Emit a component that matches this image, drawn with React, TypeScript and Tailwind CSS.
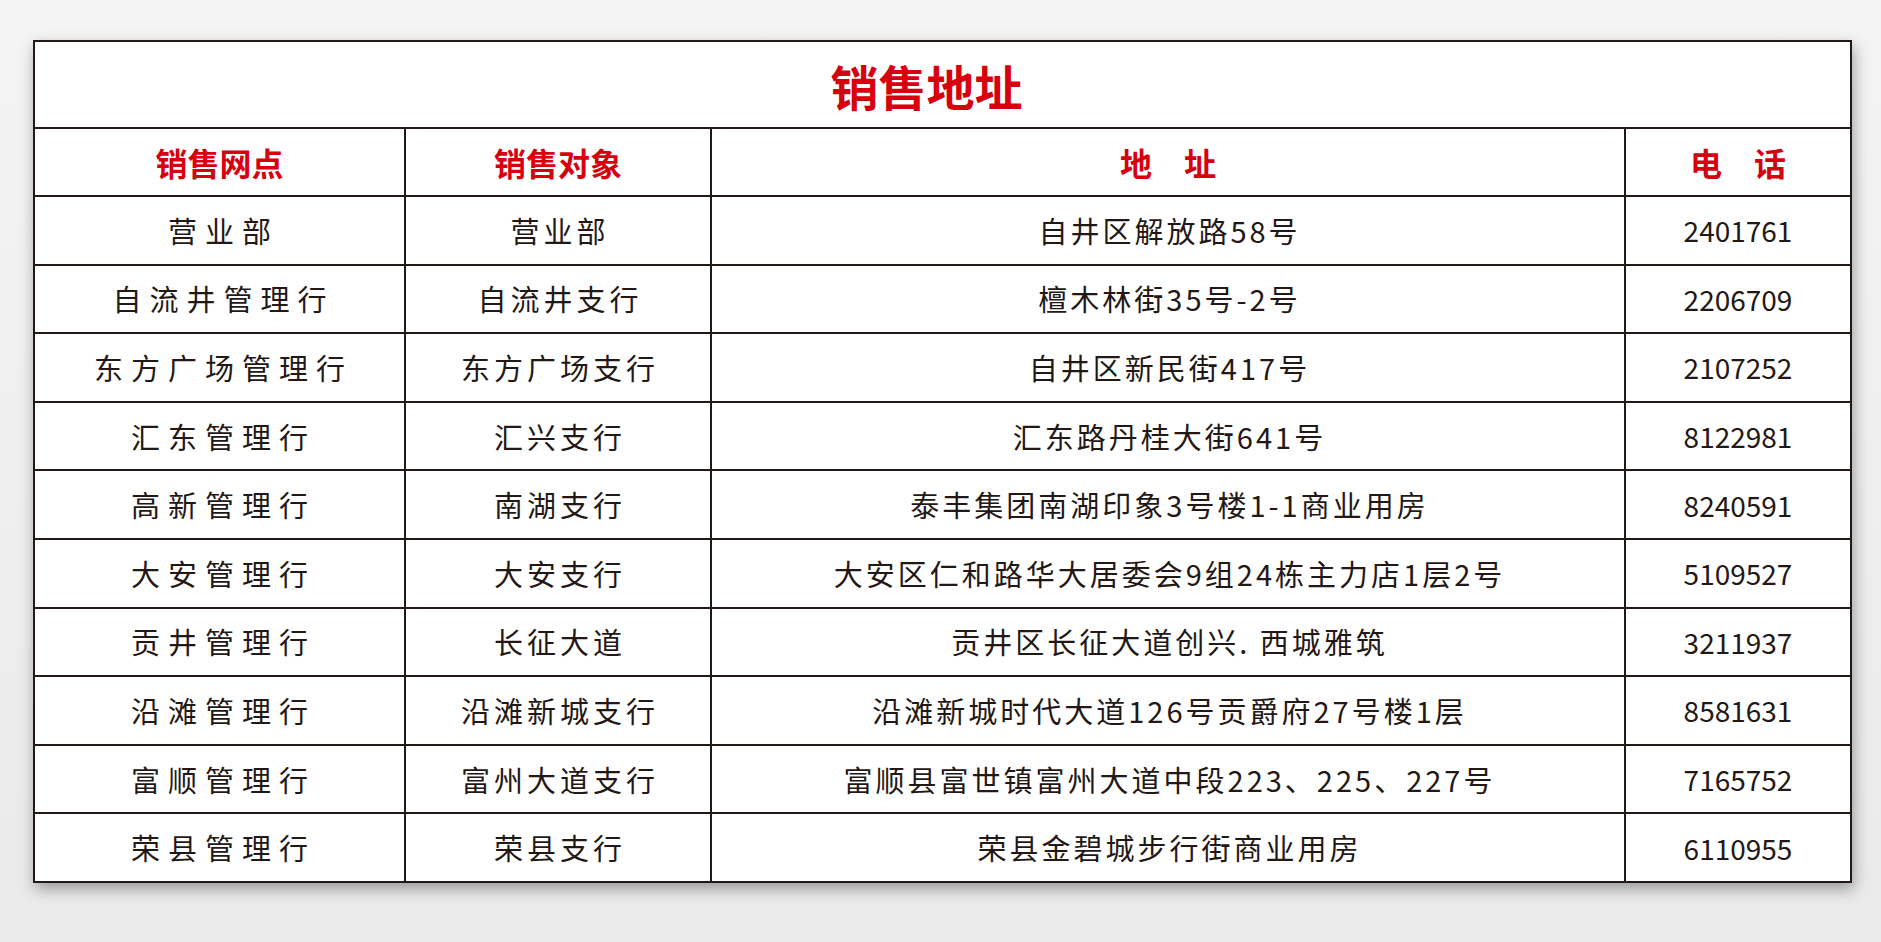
import React from "react";

const rows = [
  ["营业部", "营业部", "自井区解放路58号", "2401761"],
  ["自流井管理行", "自流井支行", "檀木林街35号-2号", "2206709"],
  ["东方广场管理行", "东方广场支行", "自井区新民街417号", "2107252"],
  ["汇东管理行", "汇兴支行", "汇东路丹桂大街641号", "8122981"],
  ["高新管理行", "南湖支行", "泰丰集团南湖印象3号楼1-1商业用房", "8240591"],
  ["大安管理行", "大安支行", "大安区仁和路华大居委会9组24栋主力店1层2号", "5109527"],
  ["贡井管理行", "长征大道", "贡井区长征大道创兴. 西城雅筑", "3211937"],
  ["沿滩管理行", "沿滩新城支行", "沿滩新城时代大道126号贡爵府27号楼1层", "8581631"],
  ["富顺管理行", "富州大道支行", "富顺县富世镇富州大道中段223、225、227号", "7165752"],
  ["荣县管理行", "荣县支行", "荣县金碧城步行街商业用房", "6110955"],
];

const headers = ["销售网点", "销售对象", "地　址", "电　话"];

export default function App() {
  return (
    <div
      className="w-[1881px] h-[942px] overflow-hidden bg-gradient-to-b from-[#f4f4f4] to-[#eaeaea] pt-[40px] pl-[33px]"
      style={{ fontFamily: '"Noto Sans CJK SC", "Noto Sans", sans-serif' }}
    >
      <table className="w-[1817px] table-fixed border-collapse bg-white text-[#231815] shadow-[2px_6px_14px_rgba(0,0,0,0.35)]">
        <colgroup>
          <col className="w-[371px]" />
          <col className="w-[306px]" />
          <col className="w-[914px]" />
          <col className="w-[226px]" />
        </colgroup>
        <thead>
          <tr className="h-[87px]">
            <th
              colSpan={4}
              className="border-2 border-[#231815] pr-[32px] text-center text-[48px] font-bold leading-none text-[#d7000f]"
            >
              销售地址
            </th>
          </tr>
          <tr className="h-[68px]">
            {headers.map((h) => (
              <th
                key={h}
                className="border-2 border-[#231815] text-center text-[32px] font-bold leading-none text-[#d7000f]"
              >
                {h}
              </th>
            ))}
          </tr>
        </thead>
        <tbody>
          {rows.map((r) => (
            <tr key={r[0]} className="h-[68.6px]">
              <td className="border-2 border-[#231815] pl-[8px] text-center text-[29px] leading-none tracking-[8px]">
                {r[0]}
              </td>
              <td className="border-2 border-[#231815] pl-[4px] text-center text-[29px] leading-none tracking-[4px]">
                {r[1]}
              </td>
              <td className="border-2 border-[#231815] pl-[3px] text-center text-[29px] leading-none tracking-[3px]">
                {r[2]}
              </td>
              <td className="border-2 border-[#231815] text-center text-[28px] leading-none">
                {r[3]}
              </td>
            </tr>
          ))}
        </tbody>
      </table>
    </div>
  );
}
